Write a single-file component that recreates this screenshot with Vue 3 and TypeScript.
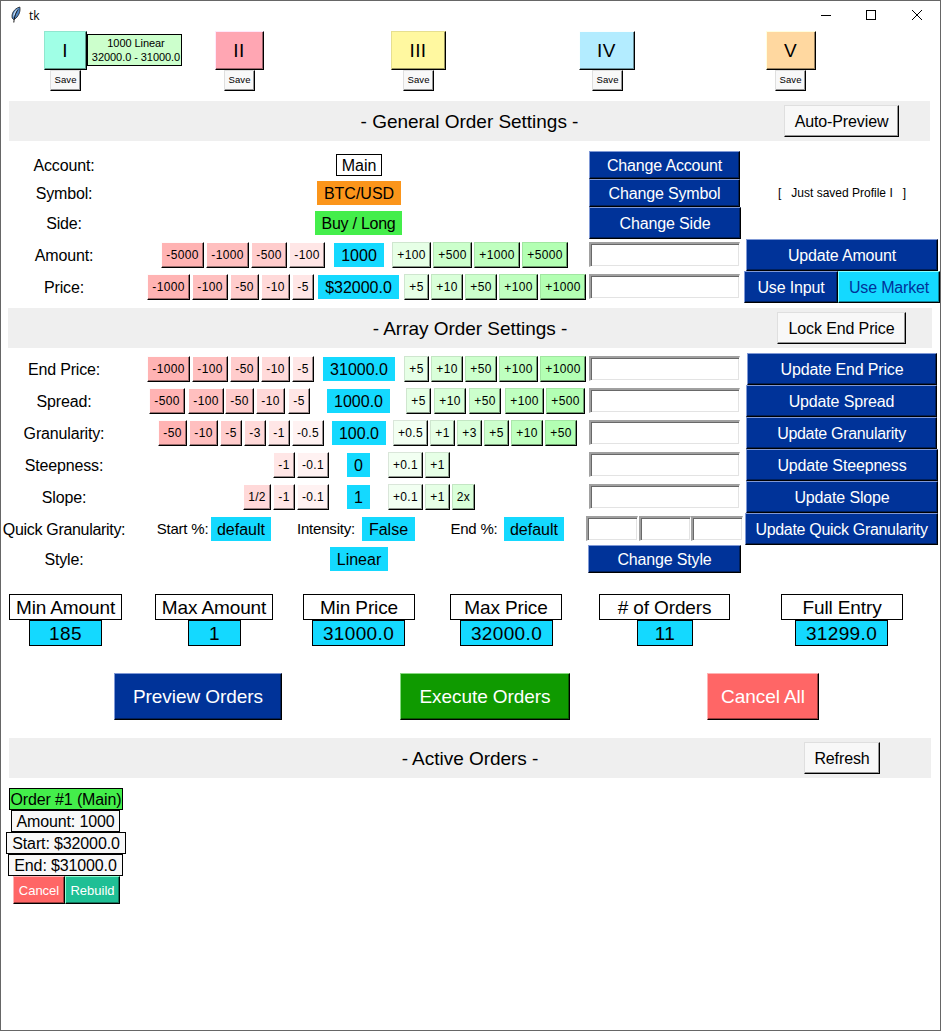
<script setup lang="ts">
type Px = number

interface Step { text: string; level: number; gap?: Px }
interface AdjustRow {
  label: string
  start: Px
  minus: Step[]
  gapLeft: Px
  value: string
  valueWidth: Px
  gapRight: Px
  plus: Step[]
  actions: { text: string; width: Px; tone?: string; ink?: string }[]
  actionOffset: Px
}

const NAVY = '#003399'
const CYAN = '#14d9ff'
const PAPER = '#f8f8f8'
const CORAL = '#ff6666'

const reds = ['#ffb3b3', '#ffbfbf', '#ffcccc', '#ffd9d9', '#ffe6e6', '#fff2f2']
const greens = ['#b3ffb3', '#bfffbf', '#ccffcc', '#d9ffd9', '#e6ffe6', '#f2fff2']

// Raised-edge colours derived from the face colour, the way Tk derives them.
function raised(face: string, width?: Px, gap?: Px) {
  const rgb = [1, 3, 5].map((i) => parseInt(face.slice(i, i + 2), 16))
  const lit = rgb[1] > 255 * 0.95
    ? rgb.map((c) => c * 0.9)
    : rgb.map((c) => Math.max(Math.min(255, c * 1.4), (255 + c) / 2))
  const dark = rgb.map((c) => c * 0.6)
  const css = (v: number[]) => `rgb(${v.map(Math.round).join(',')})`
  return {
    '--face': face,
    '--lit': css(lit),
    '--dark': css(dark),
    width: width === undefined ? undefined : `${width}px`,
    marginLeft: gap === undefined ? undefined : `${gap}px`,
  }
}

function box(width: Px, gap: Px = 0) {
  return { width: `${width}px`, marginLeft: `${gap}px` }
}

const advances: Record<string, number> = { '-': 4, '.': 3, '/': 3, x: 5 }
function stepWidth(text: string): Px {
  return 11 + [...text].reduce((sum, ch) => sum + (advances[ch] ?? 7), 0)
}

function steps(list: string, levels: number[], gaps: Px[] = []): Step[] {
  return list.split(' ').map((text, i) => ({ text, level: levels[i], gap: i === 0 ? 0 : gaps[i - 1] ?? 2 }))
}

const profiles = [
  { name: 'I', color: '#a0ffe6', width: 43, gap: 44, save: 6, note: ['1000 Linear', '32000.0 - 31000.0'] },
  { name: 'II', color: '#ffa6b3', width: 49, gap: 128, save: 9 },
  { name: 'III', color: '#fff8a0', width: 55, gap: 127, save: 12 },
  { name: 'IV', color: '#b3ecff', width: 56, gap: 133, save: 13 },
  { name: 'V', color: '#ffd8a0', width: 50, gap: 131, save: 9 },
]

const choices = [
  { label: 'Account:', value: 'Main', kind: 'main', width: 46, x: 208, action: 'Change Account', actionWidth: 151 },
  { label: 'Symbol:', value: 'BTC/USD', kind: 'symbol', width: 84, x: 189, action: 'Change Symbol', actionWidth: 151, message: '[   Just saved Profile I   ]' },
  { label: 'Side:', value: 'Buy / Long', kind: 'side', width: 87, x: 187, action: 'Change Side', actionWidth: 152 },
]

const generalRows: AdjustRow[] = [
  {
    label: 'Amount:', start: 33, minus: steps('-5000 -1000 -500 -100', [0, 1, 2, 4]), gapLeft: 9,
    value: '1000', valueWidth: 50, gapRight: 8, plus: steps('+100 +500 +1000 +5000', [4, 2, 1, 0]),
    actions: [{ text: 'Update Amount', width: 192 }], actionOffset: 2,
  },
  {
    label: 'Price:', start: 19, minus: steps('-1000 -100 -50 -10 -5', [0, 1, 2, 3, 4]), gapLeft: 4,
    value: '$32000.0', valueWidth: 81, gapRight: 5, plus: steps('+5 +10 +50 +100 +1000', [4, 3, 2, 1, 0]),
    actions: [{ text: 'Use Input', width: 94 }, { text: 'Use Market', width: 102, tone: CYAN, ink: 'ink-navy' }], actionOffset: 0,
  },
]

const arrayRows: AdjustRow[] = [
  {
    label: 'End Price:', start: 19, minus: steps('-1000 -100 -50 -10 -5', [0, 1, 2, 3, 4]), gapLeft: 9,
    value: '31000.0', valueWidth: 72, gapRight: 9, plus: steps('+5 +10 +50 +100 +1000', [4, 3, 2, 1, 0]),
    actions: [{ text: 'Update End Price', width: 190 }], actionOffset: 3,
  },
  {
    label: 'Spread:', start: 21, minus: steps('-500 -100 -50 -10 -5', [0, 1, 2, 3, 4], [3, 1, 2, 3]), gapLeft: 17,
    value: '1000.0', valueWidth: 63, gapRight: 16, plus: steps('+5 +10 +50 +100 +500', [4, 3, 2, 1, 0], [3, 3, 4, 2]),
    actions: [{ text: 'Update Spread', width: 191 }], actionOffset: 2,
  },
  {
    label: 'Granularity:', start: 30, minus: steps('-50 -10 -5 -3 -1 -0.5', [0, 1, 2, 3, 4, 5]), gapLeft: 8,
    value: '100.0', valueWidth: 54, gapRight: 7, plus: steps('+0.5 +1 +3 +5 +10 +50', [5, 4, 3, 2, 1, 0]),
    actions: [{ text: 'Update Granularity', width: 191, ink: 'tight' }], actionOffset: 2,
  },
  {
    label: 'Steepness:', start: 145, minus: steps('-1 -0.1', [4, 5]), gapLeft: 18,
    value: '0', valueWidth: 23, gapRight: 18, plus: steps('+0.1 +1', [5, 4]),
    actions: [{ text: 'Update Steepness', width: 192 }], actionOffset: 2,
  },
  {
    label: 'Slope:', start: 115, minus: steps('1/2 -1 -0.1', [3, 4, 5]), gapLeft: 18,
    value: '1', valueWidth: 23, gapRight: 18, plus: steps('+0.1 +1 2x', [5, 4, 3]),
    actions: [{ text: 'Update Slope', width: 192 }], actionOffset: 2,
  },
]

const sections = { general: generalRows, array: arrayRows }

const quick = [
  { label: 'Start %:', labelWidth: 55, gap: 27, value: 'default', width: 60, pad: 1 },
  { label: 'Intensity:', labelWidth: 60, gap: 25, value: 'False', width: 53, pad: 6 },
  { label: 'End %:', labelWidth: 50, gap: 34, value: 'default', width: 60, pad: 5 },
]

const quickEntries = [
  { width: 52, gap: 0 },
  { width: 52, gap: 1 },
  { width: 52, gap: 0 },
]

const stats = [
  { name: 'Min Amount', width: 113, gap: 9, value: '185', valueWidth: 73, inset: 20 },
  { name: 'Max Amount', width: 118, gap: 33, value: '1', valueWidth: 53, inset: 33 },
  { name: 'Min Price', width: 112, gap: 30, value: '31000.0', valueWidth: 93, inset: 9 },
  { name: 'Max Price', width: 112, gap: 35, value: '32000.0', valueWidth: 93, inset: 10 },
  { name: '# of Orders', width: 131, gap: 37, value: '11', valueWidth: 56, inset: 38 },
  { name: 'Full Entry', width: 122, gap: 51, value: '31299.0', valueWidth: 93, inset: 14 },
]

const commands = [
  { text: 'Preview Orders', color: NAVY, width: 168, gap: 114 },
  { text: 'Execute Orders', color: '#0f9a00', width: 170, gap: 118 },
  { text: 'Cancel All', color: CORAL, width: 112, gap: 137 },
]

const order = [
  { text: 'Order #1 (Main)', width: 114, gap: 9, head: true },
  { text: 'Amount: 1000', width: 109, gap: 11 },
  { text: 'Start: $32000.0', width: 120, gap: 6 },
  { text: 'End: $31000.0', width: 115, gap: 8 },
]
</script>

<template>
  <main class="window">
    <header class="titlebar">
      <svg class="feather" width="14" height="18" viewBox="0 0 14 18">
        <path d="M3.2 12C2.300 8 4.600 2.800 10.800 1c.8 3.400-.4 8-4 11.300L4.500 13.500z" fill="#4f86c6" stroke="#1c1c1c" stroke-width=".8" />
        <path d="M4.200 10.500C4.200 7.500 6 4 9.300 2.200L7.400 5.500 5 10.500z" fill="#c9e0f5" />
        <path d="M9 3.500C7 6.500 5.400 10 4.800 16.500" fill="none" stroke="#111" stroke-width="1" />
      </svg>
      <span class="caption">tk</span>
      <svg class="controls" width="102" height="12" viewBox="0 0 102 12" fill="none" stroke="#000" stroke-width="1">
        <path d="M0 5.500h10M45.500 .5h9v9h-9z" shape-rendering="crispEdges" />
        <path d="M91 0l10 10M101 0L91 10" />
      </svg>
    </header>

    <section class="profiles">
      <div v-for="p in profiles" :key="p.name" class="profile" :style="box(p.width, p.gap)">
        <button class="raised profile-name" :style="raised(p.color, p.width)">{{ p.name }}</button>
        <button class="raised save" :style="raised(PAPER, 31, p.save)">Save</button>
        <div v-if="p.note" class="note">
          <div v-for="line in p.note" :key="line">{{ line }}</div>
        </div>
      </div>
    </section>

    <div class="bar bar-general">
      <h2>- General Order Settings -</h2>
      <button class="raised tool" :style="raised(PAPER, 115)">Auto-Preview</button>
    </div>

    <template v-for="(rows, key) in sections" :key="key">
      <div v-if="key === 'array'" class="bar bar-array">
        <h2>- Array Order Settings -</h2>
        <button class="raised tool" :style="raised(PAPER, 129)">Lock End Price</button>
      </div>
      <template v-else>
        <div v-for="c in choices" :key="c.label" class="row" :class="'row-' + c.kind">
          <span class="label">{{ c.label }}</span>
          <div class="cell">
            <span class="value" :class="c.kind" :style="box(c.width, c.x)">{{ c.value }}</span>
          </div>
          <div class="cell">
            <button class="raised action" :style="raised(NAVY, c.actionWidth, 3)">{{ c.action }}</button>
          </div>
          <div class="cell"><span v-if="c.message" class="message">{{ c.message }}</span></div>
        </div>
      </template>

      <div v-for="r in rows" :key="r.label" class="row">
        <span class="label">{{ r.label }}</span>
        <div class="cell">
          <div class="steps" :style="{ marginLeft: r.start + 'px' }">
            <button v-for="s in r.minus" :key="s.text" class="raised step" :style="raised(reds[s.level], stepWidth(s.text), s.gap)">{{ s.text }}</button>
          </div>
          <span class="value" :style="box(r.valueWidth, r.gapLeft)">{{ r.value }}</span>
          <div class="steps" :style="{ marginLeft: r.gapRight + 'px' }">
            <button v-for="s in r.plus" :key="s.text" class="raised step" :style="raised(greens[s.level], stepWidth(s.text), s.gap)">{{ s.text }}</button>
          </div>
        </div>
        <div class="cell"><input class="entry" :style="box(151, 3)" /></div>
        <div class="cell">
          <button
            v-for="(a, i) in r.actions"
            :key="a.text"
            class="raised action"
            :class="a.ink"
            :style="raised(a.tone ?? NAVY, a.width, i === 0 ? r.actionOffset : 0)"
          >{{ a.text }}</button>
        </div>
      </div>
    </template>

    <div class="row">
      <span class="label tight">Quick Granularity:</span>
      <div class="cell">
        <template v-for="(q, i) in quick" :key="i">
          <span class="quick-label" :style="box(q.labelWidth, q.gap)">{{ q.label }}</span>
          <span class="value" :style="box(q.width, q.pad)">{{ q.value }}</span>
        </template>
      </div>
      <div class="cell">
        <input v-for="(e, i) in quickEntries" :key="i" class="entry" :style="box(e.width, e.gap)" />
      </div>
      <div class="cell">
        <button class="raised action tight" :style="raised(NAVY, 193, 1)">Update Quick Granularity</button>
      </div>
    </div>
    <div class="row row-style">
      <span class="label">Style:</span>
      <div class="cell"><span class="value" :style="box(58, 202)">Linear</span></div>
      <div class="cell"><button class="raised action" :style="raised(NAVY, 153, 2)">Change Style</button></div>
    </div>

    <section class="stats">
      <div v-for="s in stats" :key="s.name" :style="box(s.width, s.gap)">
        <div class="stat-name">{{ s.name }}</div>
        <div class="stat-value" :style="box(s.valueWidth, s.inset)">{{ s.value }}</div>
      </div>
    </section>

    <section class="commands">
      <button v-for="c in commands" :key="c.text" class="raised command" :style="raised(c.color, c.width, c.gap)">{{ c.text }}</button>
    </section>

    <div class="bar bar-active">
      <h2>- Active Orders -</h2>
      <button class="raised tool" :style="raised(PAPER, 76)">Refresh</button>
    </div>

    <section class="order">
      <div v-for="o in order" :key="o.text" class="order-line" :class="{ head: o.head }" :style="box(o.width, o.gap)">{{ o.text }}</div>
      <div class="order-actions">
        <button class="raised small" :style="raised(CORAL, 52)">Cancel</button>
        <button class="raised small" :style="raised('#1fbf95', 55)">Rebuild</button>
      </div>
    </section>
  </main>
</template>

<style>
body {
  margin: 0;
  background: #fff;
}
</style>

<style scoped>
.window {
  box-sizing: border-box;
  width: 941px;
  height: 1031px;
  overflow: hidden;
  background: #fff;
  outline: 1px solid #666;
  outline-offset: -1px;
  color: #000;
  font: 16px/20px "Liberation Sans", Arial, sans-serif;
}
.window * {
  box-sizing: border-box;
}
.titlebar {
  display: flex;
  height: 31px;
}
.feather {
  margin: 6px 0 0 9px;
}
.caption {
  width: 792px;
  margin: 6px 0 0 6px;
  font: 12px/20px "Open Sans", "Noto Sans", sans-serif;
}
.controls {
  margin-top: 10px;
}
.raised {
  display: flex;
  flex: none;
  align-items: center;
  justify-content: center;
  margin: 0;
  padding: 0;
  border: 1px solid #000;
  border-top-color: var(--lit);
  border-left-color: var(--lit);
  border-radius: 0;
  background: var(--face);
  box-shadow: inset -1px -1px var(--dark);
  color: #000;
  font: 16px/20px "Liberation Sans", Arial, sans-serif;
  white-space: nowrap;
}
.profiles {
  display: flex;
  height: 70px;
}
.profile {
  position: relative;
  flex: none;
}
.profile-name {
  height: 39px;
  padding-right: 1px;
  font-size: 19px;
  letter-spacing: 0.4px;
}
.save {
  height: 21px;
  padding-bottom: 1px;
  font-size: 9.5px;
  letter-spacing: 0.1px;
}
.note {
  position: absolute;
  top: 3px;
  left: 100%;
  width: 95px;
  height: 32px;
  padding: 1px 0 0 3px;
  border: 1px solid #000;
  background: #ccffcc;
  font-size: 11px;
  letter-spacing: -0.06px;
  line-height: 14px;
  text-align: center;
  white-space: nowrap;
}
.bar {
  display: flex;
  align-items: center;
  height: 40px;
  background: #efefef;
}
.bar h2 {
  flex: 1;
  margin: 0;
  padding-top: 2px;
  font-size: 19px;
  font-weight: 400;
  letter-spacing: -0.03px;
  line-height: 24px;
  text-align: center;
}
.bar-general {
  width: 921px;
  margin: 0 0 10px 9px;
  padding: 0 31px 0 146px;
}
.bar-array {
  width: 924px;
  margin: 5px 0 5px 8px;
  padding: 0 26px 0 155px;
}
.bar-active {
  width: 922px;
  margin: 18px 0 10px 9px;
  padding: 0 51px 0 127px;
}
.tool {
  height: 32px;
  padding-top: 2px;
  letter-spacing: -0.12px;
}
.row {
  display: grid;
  grid-template-columns: 128px 458px 158px 197px;
  align-items: center;
  height: 32px;
}
.row-main,
.row-symbol,
.row-style {
  height: 28px;
}
.label {
  padding-top: 2px;
  letter-spacing: -0.16px;
  text-align: center;
  white-space: nowrap;
}
.cell,
.steps {
  display: flex;
  align-items: center;
}
.value {
  flex: none;
  height: 24px;
  background: #14d9ff;
  line-height: 26px;
  text-align: center;
  white-space: nowrap;
}
.main {
  height: 22px;
  border: 1px solid #000;
  background: #fff;
  line-height: 21px;
}
.symbol {
  background: #fb951b;
}
.side {
  background: #44ee4b;
  letter-spacing: -0.25px;
}
.step {
  height: 26px;
  font-size: 12px;
  letter-spacing: 0.33px;
}
.entry {
  flex: none;
  height: 25px;
  margin-bottom: 1px;
  padding: 0 4px;
  border: solid;
  border-width: 2px 1px 1px 2px;
  border-color: #a0a0a0 #fff #fff #a0a0a0;
  border-radius: 0;
  outline: 0;
  background: #fff;
  box-shadow: inset 1px 1px #696969, inset -1px -1px #e3e3e3;
}
.action {
  height: 32px;
  padding-top: 2px;
  color: #fff;
  letter-spacing: -0.16px;
}
.row-main .action,
.row-symbol .action,
.row-style .action {
  height: 28px;
}
.tight {
  letter-spacing: -0.31px;
}
.ink-navy {
  color: #003399;
}
.message {
  margin-left: 34px;
  font-size: 12px;
  white-space: pre;
}
.quick-label {
  flex: none;
  font-size: 15px;
  letter-spacing: -0.2px;
  text-align: center;
  white-space: nowrap;
}
.stats {
  display: flex;
  height: 52px;
  margin-top: 21px;
}
.stats > div {
  flex: none;
}
.stat-name,
.stat-value {
  height: 26px;
  border: 1px solid #000;
  font-size: 19px;
  letter-spacing: -0.12px;
  line-height: 25px;
  text-align: center;
  white-space: nowrap;
}
.stat-value {
  background: #14d9ff;
  letter-spacing: 0.35px;
}
.commands {
  display: flex;
  margin-top: 27px;
}
.command {
  height: 47px;
  color: #fff;
  font-size: 19px;
  letter-spacing: -0.06px;
}
.order-line {
  height: 22px;
  border: 1px solid #000;
  background: #f8f8f8;
  letter-spacing: -0.13px;
  line-height: 21px;
  text-align: center;
  white-space: nowrap;
}
.head {
  background: #44ee4b;
}
.order-actions {
  display: flex;
  margin-left: 13px;
}
.small {
  height: 28px;
  padding-top: 1px;
  color: #fff;
  font-size: 13px;
}
</style>
